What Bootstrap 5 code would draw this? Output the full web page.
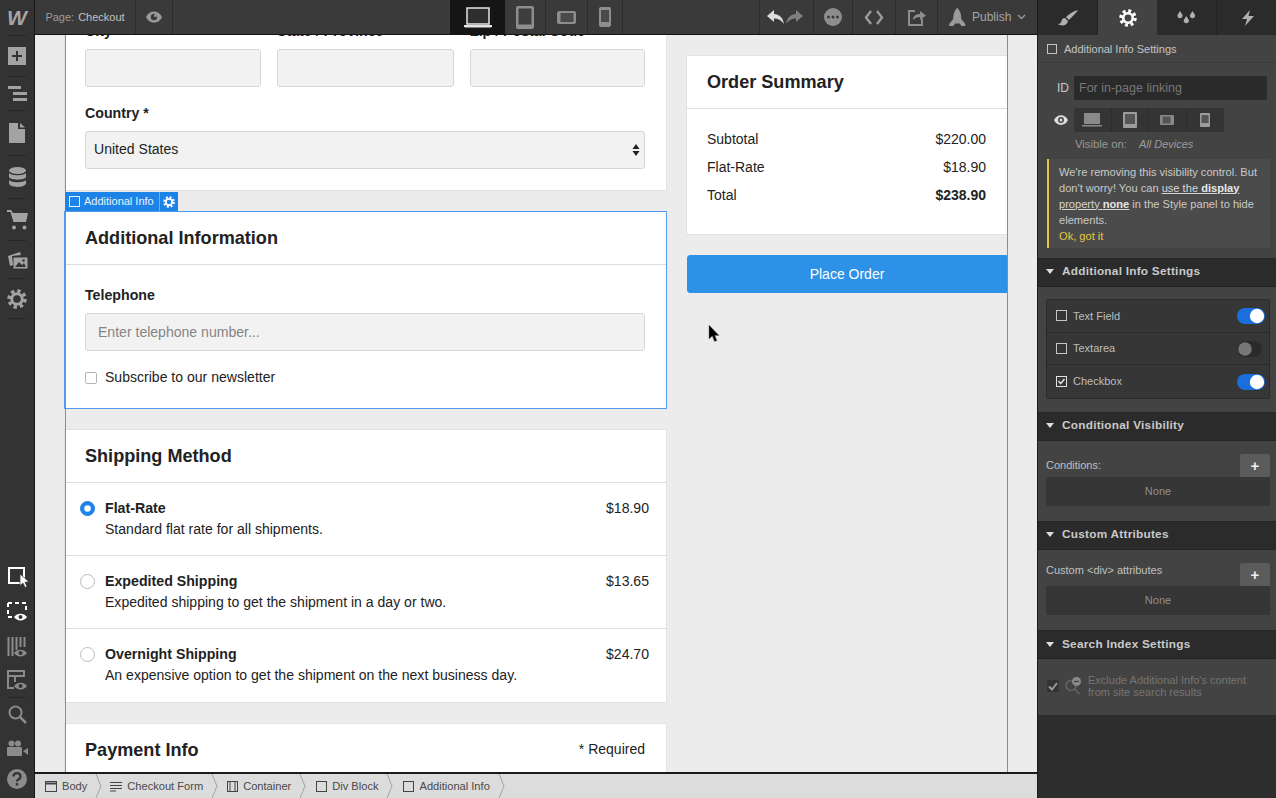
<!doctype html>
<html lang="en">
<head>
<meta charset="utf-8">
<title>Checkout</title>
<link href="https://cdn.jsdelivr.net/npm/bootstrap@5.3.0/dist/css/bootstrap.min.css" rel="stylesheet">
<style>
html,body{height:100%;margin:0;overflow:hidden}
body{font-family:"Liberation Sans",Arial,sans-serif;font-size:14px;color:#222;background:#333}
.app-shell{display:grid;grid-template-columns:35px 1002px 239px;grid-template-rows:35px 737px 26px;height:798px;width:1276px}
.rail{grid-row:1/4;grid-column:1;background:#333;border-right:1px solid #151515;color:#a3a3a3}
.rail-logo{height:35px;font-weight:700;font-style:italic;font-size:21px;line-height:35px;color:#a5a5a5;text-align:center}
.rail-cell{width:34px;display:flex;align-items:center;justify-content:center}
.rail-sep{border-top:1px solid #262626;margin:0 8px}
.h33{height:33px}.h34{height:34px}.h36{height:36px}.h37{height:37px}.h39{height:39px}.h40{height:40px}.h41{height:41px}.h42{height:42px}.h44{height:44px}
.help-cell{height:34px;padding-bottom:4px}
.topbar{grid-column:2;grid-row:1;background:#3a3a3a;border-bottom:1px solid #141414;color:#a5a5a5;height:35px;font-size:11px}
.top-cell{height:34px;display:flex;align-items:center;justify-content:center;border-right:1px solid #2c2c2c;flex:none}
.c-page{width:101px;color:#9a9a9a}
.c-page b{font-weight:400;color:#c2c2c2;margin-left:4px}
.c-eye{width:37px}
.c-gap{width:277px;border-right:0}
.c-laptop{width:55px;background:#151515;color:#d9d9d9;border-right:0}
.c-tablet{width:41px}.c-land{width:42px}.c-phone{width:35px}
.c-gap2{width:137px}
.c-undo{width:54px;gap:2px;padding-right:4px}.c-dots{width:39px}.c-code{width:43px}.c-share{width:42px}
.c-pub{width:100px;border-right:0;justify-content:flex-start;padding-left:11px;gap:6px;font-size:12px}
.work{grid-column:2;grid-row:2;background:#ececec;overflow:hidden;position:relative}
.page-wrap{margin-left:30px;margin-top:-13px;width:943px;min-height:760px;display:flex;gap:21px;position:relative}
.page-wrap::after{content:"";position:absolute;inset:0;border-left:1px solid #4f9bea;border-right:1px solid #4f9bea;pointer-events:none;z-index:2}
.col-main{width:601px;flex:none}
.col-side{width:320px;flex:none;padding-top:34px}
.sheet{border:0;border-radius:0;background:#fff;box-shadow:0 0 0 1px #e2e2e2;--bs-card-border-width:0}
.sheet .card-header{background:#fff;border-bottom:1px solid #ddd;border-radius:0;padding:0 21px 1px 20px;height:53px;display:flex;align-items:center;justify-content:space-between}
.sheet .sum-head{padding-bottom:0}
.sheet h2{font-size:18.1px;font-weight:700;margin:0;color:#222;line-height:24px}
.field-label{display:block;font-weight:700;font-size:14.2px;line-height:18px;margin:0 0 9px;color:#222}
.sheet .form-control,.sheet .form-select{height:38px;border:1px solid #d6d6d6;border-radius:3px;background-color:#f2f2f2;font-size:14.05px;color:#222;padding:0 12px;box-shadow:none}
.sheet .form-select{padding:0 0 0 8px;background-image:url("data:image/svg+xml,%3csvg xmlns='http://www.w3.org/2000/svg' width='8' height='14'%3e%3cpath d='M4 1l3.500 5h-7zM4 13L.5 8h7z' fill='%23222'/%3e%3c/svg%3e");background-size:8px 14px;background-position:right 4px center}
.sheet .form-control::placeholder{color:#858585}
.form-first{padding:0 21px 21px 20px}
.tri{display:grid;grid-template-columns:176px 177px 175px;column-gap:16px;margin-bottom:17px}
.selected-card{box-shadow:0 0 0 1px #4f9bea;margin-top:22px}
.selected-body{padding:21px 21px 0 20px;height:143px}
.sel-tag{position:absolute;left:0;top:170px;height:19px;background:#1e83e6;color:#e9f3fd;font-size:11px;display:flex;align-items:stretch;z-index:3}
.sel-tag span{display:flex;align-items:center;gap:4px;padding:0 5px 0 4px}
.sel-tag span+span{border-left:1px solid #6cb0f0;padding:0 3px}
.check-row{display:flex;align-items:center;gap:8px;font-size:14.05px;margin:16px 0 0}
.check-row .form-check-input{width:12px;height:12px;margin:0;border:1px solid #b5b5b5;border-radius:2px;flex:none}
.ship{margin-top:22px}
.ship .list-group-item{border:0;border-bottom:1px solid #ddd;border-radius:0;height:73px;padding:15px 17px 0 15px;display:flex;gap:10px;font-size:14.05px;line-height:21px;color:#222}
.ship .list-group-item:last-child{border-bottom:0}
.ship .form-check-input{width:15px;height:15px;margin:3px 0 0;flex:none;border:1px solid #bcbcbc;background-color:#fff}
.ship .form-check-input:checked{background-color:#1e83e6;border-color:#1e83e6}
.ship .ship-name{font-weight:700;font-size:14.2px}
.pay{margin-top:22px;height:120px}
.pay .req{font-size:14px}
.sum-body{padding:16px 21px 0 20px;height:125px}
.sum-line{display:flex;justify-content:space-between;font-size:14px;line-height:28px;height:28px}
.place-btn{--bs-btn-bg:#2e91e8;--bs-btn-border-color:#2e91e8;--bs-btn-border-radius:3px;--bs-btn-hover-bg:#2e91e8;width:320px;height:38px;margin-top:21px;font-size:14px;border-radius:3px 0 0 3px;display:block}
.cursor{position:absolute;left:673px;top:290px;z-index:4}
.crumbs{grid-column:2;grid-row:3;background:#dcdcdc;border-top:2px solid #1a1a1a;color:#4a4a4a;font-size:11.1px;height:26px}
.crumb{display:flex;align-items:center;gap:5px;height:24px;flex:none}
.crumb span{padding-top:1px}
.crumb svg.ic{color:#444;flex:none}
.crumb svg.gt{color:#a3a3a3;flex:none;margin-left:3px}
.cr-1{margin-left:10px}.cr-2{margin-left:8px}.cr-3{margin-left:9px}.cr-4{margin-left:10px}.cr-5{margin-left:10px}
.panel{grid-column:3;grid-row:1/4;background:#2d2d2d;color:#c9c9c9;font-size:11px;border-left:1px solid #1b1b1b;overflow:hidden}
.tabs{height:35px;display:grid;grid-template-columns:60px 59px 60px 59px;background:#2b2b2b;color:#b5b5b5}
.tabs>div{display:flex;align-items:center;justify-content:center;border-right:1px solid #222}
.tabs>div:last-child{padding-left:3px;border-right:0}
.tabs>.on{background:#434343;color:#fff;border-right:0}
.pane{background:#434343}
.pane-title{height:28px;display:flex;align-items:center;gap:7px;padding:1px 0 0 9px;border-bottom:1px solid #3a3a3a;color:#c5c5c5}
.pane-main{padding:13px 6px 10px 9px}
.id-row{display:flex;align-items:center;gap:5px;height:24px;padding-left:10px;font-size:12px;color:#c9c9c9}
.id-row .form-control{height:24px;background:#2a2a2a;border:0;border-radius:2px;width:193px;font-size:12.5px;padding:0 5px;color:#ddd;box-shadow:none}
.id-row .form-control::placeholder{color:#777}
.vis-row{display:flex;align-items:center;margin-top:8px;height:24px;padding-left:7px;gap:6px;color:#ddd}
.dev-group{display:flex;background:#343434;border-radius:2px;height:24px;color:#9a9a9a}
.dev-group>div{width:37.5px;display:flex;align-items:center;justify-content:center;border-right:1px solid #2c2c2c}
.dev-group>div:last-child{border:0}
.vis-note{margin:5px 0 8px 28px;font-size:11.3px;line-height:14px;color:#999;display:flex;gap:12px}
.vis-note i{color:#9d9d9d;font-size:11px}
.warn{background:#4b4b4b;border-left:2px solid #e6c640;padding:0 5px 0 10px;font-size:11.1px;line-height:16px;height:89px;color:#c9c9c9;width:223px;display:flex;flex-direction:column;justify-content:center;white-space:nowrap}
.warn a{color:#d5d5d5;text-decoration:underline}
.warn a b{font-weight:700;color:#e6e6e6}
.warn .ok{color:#e6c640}
.sec-head{height:29px;background:#2b2b2b;display:flex;align-items:center;gap:8px;padding:0 0 2px 8px;font-size:11.8px;font-weight:700;letter-spacing:.25px;color:#c9c9c9;border-top:1px solid #262626;border-bottom:1px solid #232323}
.sec-head.sec-last{padding-bottom:0}
.sec-body{background:#434343;padding:12px 6px 13px 8px}
.tog-box{background:#363636;border:1px solid #2a2a2a;border-radius:2px;height:100px;margin:0;overflow:hidden}
.tog-box .list-group-item{background:#363636;border:0;border-bottom:1px solid #2a2a2a;border-radius:0;height:33.3px;padding:0 4px 0 9px;display:flex;align-items:center;gap:6px;color:#bdbdbd;font-size:11px}
.tog-box .list-group-item:last-child{border-bottom:0}
.tog-box .form-switch{margin:0 0 0 auto;padding:0;min-height:0;display:flex}
.tog-box .form-check-input{width:28px;height:16px;margin:0;border:0;background-color:#2a2a2a;border-radius:8px;background-image:url("data:image/svg+xml,%3csvg xmlns='http://www.w3.org/2000/svg' viewBox='-4 -4 8 8'%3e%3ccircle r='3.400' fill='%23777'/%3e%3c/svg%3e");box-shadow:none;background-position:left center}
.tog-box .form-check-input:checked{background-color:#1a6fdc;background-position:right center;background-image:url("data:image/svg+xml,%3csvg xmlns='http://www.w3.org/2000/svg' viewBox='-4 -4 8 8'%3e%3ccircle r='3.600' fill='%23fff'/%3e%3c/svg%3e")}
.tog-box .form-check-input.tog-off{width:25px;margin-right:3px}
.add-row{display:flex;justify-content:space-between;align-items:flex-end;height:23px;color:#c0c0c0;font-size:11px}
.add-row span{padding-bottom:4px}
.add-row.tall{height:24px}
.add-row.tall span{padding-bottom:8px}
.plus-btn{--bs-btn-padding-x:0;--bs-btn-padding-y:0;width:30px;height:23px;background:#5b5b5b;border:0;border-radius:2px 2px 0 0;color:#eee;font-size:15px;font-weight:700;line-height:23px}
.none-box{height:29px;background:#363636;border-radius:0 0 2px 2px;color:#8f8f8f;text-align:center;line-height:29px;font-size:11px}
.sec-body.tight{padding:13px 6px 15px 8px}
.sec-body.tight2{padding:12px 6px 15px 8px}
.sec-body.search-body{padding:11px 6px 13px 8px}
.search-row{display:flex;align-items:center;padding:4px 0;font-size:11px;line-height:12.2px;color:#757575;gap:6px}
.dim-check{width:12px;height:12px;background:#333;border-radius:2px;display:flex;align-items:center;justify-content:center;margin-left:1px;flex:none}
</style>
</head>
<body>
<div class="app-shell">

  <aside class="rail d-flex flex-column">
    <div class="rail-logo">W</div>
    <div class="rail-sep"></div>
    <div>
      <div class="rail-cell h40"><svg width="18" height="18" viewBox="0 0 18 18"><rect width="18" height="18" fill="#a3a3a3"/><path d="M9 4v10M4 9h10" stroke="#333" stroke-width="2"/></svg></div>
      <div class="rail-sep"></div>
      <div class="rail-cell h33"><svg width="19" height="15" viewBox="0 0 19 15" fill="#a3a3a3"><rect width="13" height="3"/><rect x="5" y="6" width="14" height="3"/><rect x="5" y="12" width="14" height="3"/></svg></div>
      <div class="rail-sep"></div>
      <div class="rail-cell h44"><svg width="16" height="20" viewBox="0 0 16 20" fill="#a3a3a3"><path d="M0 0h9v6h7v14H0zM11 0l5 4.500h-5z"/></svg></div>
      <div class="rail-sep"></div>
      <div class="rail-cell h42"><svg width="17" height="20" viewBox="0 0 17 20" fill="#a3a3a3"><ellipse cx="8.500" cy="3.500" rx="8.500" ry="3.500"/><path d="M0 6c2 3 15 3 17 0v4c-1 3.500-16 3.500-17 0zM0 13c2 3 15 3 17 0v3.500c-1 4.500-16 4.500-17 0z"/></svg></div>
      <div class="rail-sep"></div>
      <div class="rail-cell h41"><svg width="21" height="20" viewBox="0 0 21 20" fill="#a3a3a3"><path d="M0 0h4l2 3h15l-2 9H6.500L3.500 2H0z"/><circle cx="7" cy="17.500" r="2"/><circle cx="17.500" cy="17.500" r="2"/></svg></div>
      <div class="rail-sep"></div>
      <div class="rail-cell h37"><svg width="21" height="18" viewBox="0 0 21 18"><path d="M1 5l12-4 1 3-9 1 1 9-3 1z" fill="#a3a3a3"/><rect x="6.500" y="6.500" width="14" height="11" fill="#a3a3a3"/><path d="M8 16l4-5 3 3 2-2 2 4z" fill="#333"/><circle cx="16.500" cy="9.500" r="1.300" fill="#333"/></svg></div>
      <div class="rail-sep"></div>
      <div class="rail-cell h39"><svg width="20" height="20" viewBox="-10 -10 20 20" fill="none" stroke="#a3a3a3"><circle r="5.300" stroke-width="3"/><circle r="8" stroke-width="3.500" stroke-dasharray="3.300 2.983"/></svg></div>
      <div class="rail-sep"></div>
    </div>
    <div class="mt-auto">
      <div class="rail-cell h36"><svg width="23" height="23" viewBox="0 0 23 23"><path d="M3 3h15v15H3z" fill="none" stroke="#fff" stroke-width="2"/><path d="M14 9v11.500l3-2.500 2 4.500 2-1-2-4.300 4-.4z" fill="#fff" stroke="#333" stroke-width=".7"/></svg></div>
      <div class="rail-cell h36"><svg width="21" height="20" viewBox="0 0 21 20" fill="none"><path d="M1 1h18v9M1 1v14h5" stroke="#fff" stroke-width="2" stroke-dasharray="4 3"/><path d="M7 15c3-4.500 10-4.500 13 0-3 4.500-10 4.500-13 0z" fill="#fff"/><circle cx="13.500" cy="15" r="2" fill="#333"/></svg></div>
      <div class="rail-cell h34"><svg width="21" height="21" viewBox="0 0 21 21" fill="none"><path d="M1.500 0v19M5.500 0v19M9.500 0v13M13.500 0v10M17.500 0v10" stroke="#8b8b8b" stroke-width="2"/><path d="M7 16c3-4.500 10-4.500 13 0-3 4.500-10 4.500-13 0z" fill="#8b8b8b"/><circle cx="13.500" cy="16" r="2" fill="#333"/></svg></div>
      <div class="rail-cell h33"><svg width="21" height="21" viewBox="0 0 21 21" fill="none"><path d="M1 1h16v5H1zM1 6v12h6M8 6v6" stroke="#8b8b8b" stroke-width="2"/><path d="M7 16c3-4.500 10-4.500 13 0-3 4.500-10 4.500-13 0z" fill="#8b8b8b"/><circle cx="13.500" cy="16" r="2" fill="#333"/></svg></div>
      <div class="rail-sep"></div>
      <div class="rail-cell h33"><svg width="19" height="19" viewBox="0 0 19 19" fill="none" stroke="#8b8b8b" stroke-width="2"><circle cx="7.500" cy="7.500" r="6"/><path d="M12 12l6 6" stroke-width="2.500"/></svg></div>
      <div class="rail-cell h33"><svg width="21" height="16" viewBox="0 0 21 16" fill="#8b8b8b"><circle cx="4.500" cy="3.500" r="3"/><circle cx="11" cy="3.500" r="3"/><rect x="0" y="7" width="15" height="9" rx="1"/><path d="M16 11l5-3v7z"/></svg></div>
      <div class="rail-cell help-cell"><svg width="20" height="20" viewBox="0 0 20 20"><circle cx="10" cy="10" r="10" fill="#8b8b8b"/><path d="M6.500 7.500c0-4.500 7-4.500 7 0 0 3-3.500 2.500-3.500 5" fill="none" stroke="#333" stroke-width="2.300"/><rect x="8.800" y="14" width="2.400" height="2.400" fill="#333"/></svg></div>
    </div>
  </aside>

  <header class="topbar d-flex">
    <div class="top-cell c-page">Page:<b>Checkout</b></div>
    <div class="top-cell c-eye"><svg width="16" height="12" viewBox="0 0 16 12"><path d="M0 6c3-7.500 13-7.500 16 0-3 7.500-13 7.500-16 0z" fill="#9a9a9a"/><circle cx="8" cy="6" r="3.200" fill="#3a3a3a"/><circle cx="9.500" cy="4.500" r="1.500" fill="#9a9a9a"/></svg></div>
    <div class="top-cell c-gap"></div>
    <div class="top-cell c-laptop"><svg width="28" height="21" viewBox="0 0 28 21"><rect x="3" y="1" width="22" height="16" fill="#2e2e2e" stroke="#e4e4e4" stroke-width="1.500"/><path d="M0 18h28v1.500l-1 1H1l-1-1z" fill="#e4e4e4"/></svg></div>
    <div class="top-cell c-tablet"><svg width="18" height="23" viewBox="0 0 18 23"><rect width="18" height="23" rx="2" fill="#8d8d8d"/><rect x="2.500" y="2.500" width="13" height="16" fill="#3e3e3e"/></svg></div>
    <div class="top-cell c-land"><svg width="19" height="13" viewBox="0 0 19 13"><rect width="19" height="13" rx="2" fill="#8d8d8d"/><rect x="3.500" y="2" width="13" height="9" fill="#4a4a4a"/></svg></div>
    <div class="top-cell c-phone"><svg width="12" height="20" viewBox="0 0 12 20"><rect width="12" height="20" rx="2" fill="#8d8d8d"/><rect x="2" y="3" width="8" height="12" fill="#4a4a4a"/></svg></div>
    <div class="top-cell c-gap2"></div>
    <div class="top-cell c-undo"><svg width="17" height="14" viewBox="0 0 17 14"><path d="M7 0L0 6l7 6V8.500c4 0 7 1.500 10 5.500-1-6-4-9.500-10-10z" fill="#dcdcdc"/></svg><svg width="17" height="14" viewBox="0 0 17 14"><path d="M10 0l7 6-7 6V8.500c-4 0-7 1.500-10 5.500 1-6 4-9.500 10-10z" fill="#7f7f7f"/></svg></div>
    <div class="top-cell c-dots"><svg width="18" height="18" viewBox="0 0 18 18"><circle cx="9" cy="9" r="9" fill="#8d8d8d"/><circle cx="4.500" cy="9" r="1.500" fill="#3a3a3a"/><circle cx="9" cy="9" r="1.500" fill="#3a3a3a"/><circle cx="13.500" cy="9" r="1.500" fill="#3a3a3a"/></svg></div>
    <div class="top-cell c-code"><svg width="20" height="15" viewBox="0 0 20 15" fill="none" stroke="#9a9a9a" stroke-width="2.400"><path d="M7 1L2 7.500 7 14M13 1l5 6.500L13 14"/></svg></div>
    <div class="top-cell c-share"><svg width="18" height="18" viewBox="0 0 18 18" fill="none"><path d="M7 3H1v14h13v-6" stroke="#8d8d8d" stroke-width="2"/><path d="M5 12c0-4 3-6 7-6V3l6 4.500L12 12V9c-3 0-5 1-7 3z" fill="#8d8d8d"/></svg></div>
    <div class="top-cell c-pub"><svg width="17" height="18" viewBox="0 0 17 18" fill="#9a9a9a"><path d="M8.500 0c3 3 3.800 7 3.800 11l4 5v2h-4l-1.500-2.500h-4.600L4.200 18h-4v-2l4-5c0-4 .8-8 3.800-11z"/></svg><span>Publish</span><svg width="9" height="6" viewBox="0 0 9 6" fill="none" stroke="#9a9a9a" stroke-width="1.300"><path d="M1 1l3.500 3.500L8 1"/></svg></div>
  </header>

  <main class="work">
    <div class="page-wrap">
      <div class="col-main">
        <div class="card sheet">
          <form class="form-first">
            <div class="tri">
              <div><label class="field-label">City</label><input class="form-control" type="text" aria-label="City"></div>
              <div><label class="field-label">State / Province</label><input class="form-control" type="text" aria-label="State"></div>
              <div><label class="field-label">Zip / Postal Code</label><input class="form-control" type="text" aria-label="Zip"></div>
            </div>
            <label class="field-label">Country *</label>
            <select class="form-select" aria-label="Country"><option>United States</option></select>
          </form>
        </div>

        <div class="sel-tag">
          <span><svg width="11" height="11" viewBox="0 0 11 11"><rect x=".5" y=".5" width="10" height="10" fill="none" stroke="#e9f3fd"/></svg>Additional Info</span>
          <span><svg width="12" height="12" viewBox="-10 -10 20 20" fill="none" stroke="#fff"><circle r="5.300" stroke-width="3"/><circle r="8" stroke-width="3.500" stroke-dasharray="3.300 2.983"/></svg></span>
        </div>

        <div class="card sheet selected-card">
          <div class="card-header"><h2>Additional Information</h2></div>
          <div class="card-body selected-body">
            <label class="field-label">Telephone</label>
            <input class="form-control" type="text" placeholder="Enter telephone number...">
            <label class="check-row"><input class="form-check-input" type="checkbox">Subscribe to our newsletter</label>
          </div>
        </div>

        <div class="card sheet ship">
          <div class="card-header"><h2>Shipping Method</h2></div>
          <div class="list-group list-group-flush">
            <label class="list-group-item"><input class="form-check-input" type="radio" name="ship" checked><div class="flex-grow-1"><div class="d-flex justify-content-between"><span class="ship-name">Flat-Rate</span><span>$18.90</span></div><div>Standard flat rate for all shipments.</div></div></label>
            <label class="list-group-item"><input class="form-check-input" type="radio" name="ship"><div class="flex-grow-1"><div class="d-flex justify-content-between"><span class="ship-name">Expedited Shipping</span><span>$13.65</span></div><div>Expedited shipping to get the shipment in a day or two.</div></div></label>
            <label class="list-group-item"><input class="form-check-input" type="radio" name="ship"><div class="flex-grow-1"><div class="d-flex justify-content-between"><span class="ship-name">Overnight Shipping</span><span>$24.70</span></div><div>An expensive option to get the shipment on the next business day.</div></div></label>
          </div>
        </div>

        <div class="card sheet pay">
          <div class="card-header"><h2>Payment Info</h2><span class="req">* Required</span></div>
        </div>
      </div>

      <div class="col-side">
        <div class="card sheet">
          <div class="card-header sum-head"><h2>Order Summary</h2></div>
          <div class="sum-body">
            <div class="sum-line"><span>Subtotal</span><span>$220.00</span></div>
            <div class="sum-line"><span>Flat-Rate</span><span>$18.90</span></div>
            <div class="sum-line"><span>Total</span><strong>$238.90</strong></div>
          </div>
        </div>
        <button class="btn btn-primary place-btn" type="button">Place Order</button>
      </div>
    </div>
    <svg class="cursor" width="12" height="18" viewBox="0 0 12 18"><path d="M1 0v14l3.300-3 2.200 5.500 2.500-1-2.200-5H11z" fill="#000" stroke="#777" stroke-width=".5"/></svg>
  </main>

  <footer class="crumbs d-flex">
    <div class="crumb cr-1"><svg class="ic" width="12" height="11" viewBox="0 0 12 11" fill="none" stroke="currentColor"><rect x=".5" y=".5" width="11" height="10"/><path d="M1 2.500h10" stroke-width="2"/></svg><span>Body</span><svg class="gt" width="7" height="24" viewBox="0 0 7 24" fill="none" stroke="currentColor"><path d="M1 0l5 12-5 12"/></svg></div>
    <div class="crumb cr-2"><svg class="ic" width="12" height="11" viewBox="0 0 12 11" fill="none" stroke="currentColor"><path d="M0 1.500h12M0 4.500h12M0 7.500h12M0 10h6"/></svg><span>Checkout Form</span><svg class="gt" width="7" height="24" viewBox="0 0 7 24" fill="none" stroke="currentColor"><path d="M1 0l5 12-5 12"/></svg></div>
    <div class="crumb cr-3"><svg class="ic" width="11" height="11" viewBox="0 0 11 11" fill="none" stroke="currentColor"><rect x=".5" y=".5" width="10" height="10"/><path d="M3 1v9M8 1v9"/></svg><span>Container</span><svg class="gt" width="7" height="24" viewBox="0 0 7 24" fill="none" stroke="currentColor"><path d="M1 0l5 12-5 12"/></svg></div>
    <div class="crumb cr-4"><svg class="ic" width="11" height="11" viewBox="0 0 11 11" fill="none" stroke="currentColor"><rect x=".5" y=".5" width="10" height="10"/></svg><span>Div Block</span><svg class="gt" width="7" height="24" viewBox="0 0 7 24" fill="none" stroke="currentColor"><path d="M1 0l5 12-5 12"/></svg></div>
    <div class="crumb cr-5"><svg class="ic" width="11" height="11" viewBox="0 0 11 11" fill="none" stroke="currentColor"><rect x=".5" y=".5" width="10" height="10"/></svg><span>Additional Info</span><svg class="gt" width="7" height="24" viewBox="0 0 7 24" fill="none" stroke="currentColor"><path d="M1 0l5 12-5 12"/></svg></div>
  </footer>

  <aside class="panel">
    <div class="tabs">
      <div><svg width="20" height="16" viewBox="0 0 20 16" fill="#b0b0b0"><path d="M20 0C16 1 11 4 8 7l3 3c3-3 7-7 9-10zM7 8c-2 0-3 1-3.500 3C3 13 2 14 0 14c3 2.500 9 2 10-3z"/></svg></div>
      <div class="on"><svg width="18" height="18" viewBox="-10 -10 20 20" fill="none" stroke="#fff"><circle r="5.300" stroke-width="3"/><circle r="8" stroke-width="3.500" stroke-dasharray="3.300 2.983"/></svg></div>
      <div><svg width="19" height="14" viewBox="0 0 19 14" fill="#b0b0b0"><path d="M3 0l2.500 4a2.600 2.600 0 1 1-5 0zM15.500 0L18 4a2.600 2.600 0 1 1-5 0zM9.300 5l2.500 4a2.600 2.600 0 1 1-5 0z"/></svg></div>
      <div><svg width="12" height="16" viewBox="0 0 12 16" fill="#b0b0b0"><path d="M8 0L0 9h5l-2 7 9-10H6.500z"/></svg></div>
    </div>

    <div class="pane">
      <div class="pane-title"><svg width="10" height="10" viewBox="0 0 10 10"><rect x=".5" y=".5" width="9" height="9" fill="none" stroke="#c5c5c5"/></svg><span>Additional Info Settings</span></div>
      <div class="pane-main">
        <div class="id-row"><span>ID</span><input class="form-control" type="text" placeholder="For in-page linking"></div>
        <div class="vis-row">
          <svg width="14" height="10" viewBox="0 0 14 10"><path d="M0 5c3-6.500 11-6.500 14 0-3 6.500-11 6.500-14 0z" fill="#ddd"/><circle cx="7" cy="5" r="3" fill="#434343"/><circle cx="7" cy="5" r="1.500" fill="#ddd"/></svg>
          <div class="dev-group">
            <div><svg width="20" height="14" viewBox="0 0 20 14"><rect x="2" y="0" width="16" height="11" fill="#8a8a8a"/><rect x="0" y="12" width="20" height="1.500" fill="#8a8a8a"/></svg></div>
            <div><svg width="14" height="16" viewBox="0 0 14 16"><rect width="14" height="16" rx="1" fill="#9c9c9c"/><rect x="2" y="2" width="10" height="10" fill="#555"/></svg></div>
            <div><svg width="14" height="10" viewBox="0 0 14 10"><rect width="14" height="10" rx="1" fill="#8a8a8a"/><rect x="2.500" y="1.500" width="8" height="7" fill="#555"/></svg></div>
            <div><svg width="10" height="14" viewBox="0 0 10 14"><rect width="10" height="14" rx="1" fill="#9c9c9c"/><rect x="1.500" y="2" width="7" height="8" fill="#555"/></svg></div>
          </div>
        </div>
        <div class="vis-note"><span>Visible on:</span><i>All Devices</i></div>
        <div class="warn">
          <div>We're removing this visibility control. But</div>
          <div>don't worry! You can <a href="#">use the <b>display</b></a></div>
          <div><a href="#">property <b>none</b></a> in the Style panel to hide</div>
          <div>elements.</div>
          <div class="ok">Ok, got it</div>
        </div>
      </div>
    </div>

    <div class="sec-head"><svg width="8" height="5" viewBox="0 0 8 5" fill="#ddd"><path d="M0 0h8L4 5z"/></svg><span>Additional Info Settings</span></div>
    <div class="sec-body">
      <div class="list-group tog-box">
        <div class="list-group-item"><svg width="11" height="11" viewBox="0 0 11 11"><rect x=".5" y=".5" width="10" height="10" fill="none" stroke="#c5c5c5"/></svg><span>Text Field</span><div class="form-check form-switch"><input class="form-check-input" type="checkbox" aria-label="Text Field" checked></div></div>
        <div class="list-group-item"><svg width="11" height="11" viewBox="0 0 11 11"><rect x=".5" y=".5" width="10" height="10" fill="none" stroke="#c5c5c5"/></svg><span>Textarea</span><div class="form-check form-switch"><input class="form-check-input tog-off" type="checkbox" aria-label="Textarea"></div></div>
        <div class="list-group-item"><svg width="11" height="11" viewBox="0 0 11 11" fill="none" stroke="#e0e0e0"><rect x=".5" y=".5" width="10" height="10"/><path d="M2.500 5l2.200 2.500L8.500 3" stroke-width="1.500"/></svg><span>Checkbox</span><div class="form-check form-switch"><input class="form-check-input" type="checkbox" aria-label="Checkbox" checked></div></div>
      </div>
    </div>

    <div class="sec-head"><svg width="8" height="5" viewBox="0 0 8 5" fill="#ddd"><path d="M0 0h8L4 5z"/></svg><span>Conditional Visibility</span></div>
    <div class="sec-body tight">
      <div class="add-row"><span>Conditions:</span><button class="btn plus-btn" type="button">+</button></div>
      <div class="none-box">None</div>
    </div>

    <div class="sec-head"><svg width="8" height="5" viewBox="0 0 8 5" fill="#ddd"><path d="M0 0h8L4 5z"/></svg><span>Custom Attributes</span></div>
    <div class="sec-body tight2">
      <div class="add-row tall"><span>Custom &lt;div&gt; attributes</span><button class="btn plus-btn" type="button">+</button></div>
      <div class="none-box">None</div>
    </div>

    <div class="sec-head sec-last"><svg width="8" height="5" viewBox="0 0 8 5" fill="#ddd"><path d="M0 0h8L4 5z"/></svg><span>Search Index Settings</span></div>
    <div class="sec-body search-body">
      <div class="search-row">
        <div class="dim-check"><svg width="10" height="9" viewBox="0 0 10 9" fill="none" stroke="#999" stroke-width="2"><path d="M1 4.500l3 3L9 1"/></svg></div>
        <svg width="17" height="18" viewBox="0 0 17 18" fill="none" stroke="#666"><circle cx="6" cy="8.500" r="5" stroke-width="1.500"/><path d="M9.500 12l5 5" stroke-width="1.500"/><circle cx="11.500" cy="4.500" r="4.500" fill="#8a8a8a" stroke="none"/><path d="M9 4.500h5" stroke="#434343" stroke-width="1.300"/></svg>
        <div><div>Exclude Additional Info's content</div><div>from site search results</div></div>
      </div>
    </div>
  </aside>
</div>
<script src="https://cdn.jsdelivr.net/npm/bootstrap@5.3.0/dist/js/bootstrap.bundle.min.js"></script>
</body>
</html>
